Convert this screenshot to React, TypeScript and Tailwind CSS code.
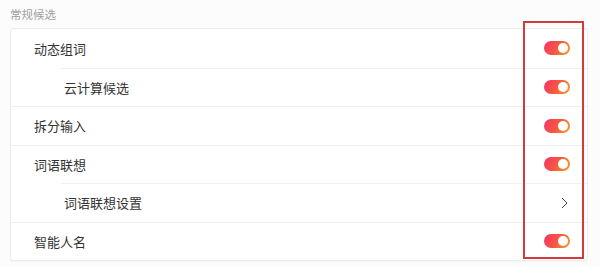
import React from "react";

type Item = { label: string; sub?: boolean; kind: "toggle" | "arrow" };

const items: Item[] = [
  { label: "动态组词", kind: "toggle" },
  { label: "云计算候选", sub: true, kind: "toggle" },
  { label: "拆分输入", kind: "toggle" },
  { label: "词语联想", kind: "toggle" },
  { label: "词语联想设置", sub: true, kind: "arrow" },
  { label: "智能人名", kind: "toggle" },
];

function Toggle() {
  return (
    <div className="relative h-[14px] w-[26px] rounded-full bg-[linear-gradient(120deg,#f5336e_0%,#f6583f_50%,#f8a02a_100%)]">
      <div className="absolute right-[2px] top-[2px] h-[10px] w-[10px] rounded-full bg-white" />
    </div>
  );
}

function Chevron() {
  return (
    <svg width="7" height="12" viewBox="0 0 7 12" fill="none">
      <path d="M1 1l5 5-5 5" stroke="#444" strokeWidth="1" />
    </svg>
  );
}

export default function App() {
  return (
    <div
      className="relative h-[267px] w-[600px] bg-[#fcfcfc] pt-[6px]"
      style={{ fontFamily: '"Noto Sans CJK SC", "Noto Sans", sans-serif' }}
    >
      <div className="ml-[10px] h-[22px] text-[11.5px] leading-[16px] text-[#a0a0a0]">常规候选</div>
      <div className="mx-[10px] w-[578px] overflow-hidden rounded-[3px] border border-[#ececec] bg-white shadow-[0_1px_1px_rgba(0,0,0,0.03)]">
        {items.map((it, i) => (
          <div
            key={it.label}
            className={`flex h-[38.5px] items-center ${i > 0 ? "border-t border-[#f0f0f0]" : ""} ${
              it.sub ? "ml-[50px] pl-[3px]" : "pl-[23px]"
            }`}
          >
            <span className="flex-1 text-[13px] text-[#333]">{it.label}</span>
            <div className={`mr-[17px] flex w-[26px] ${it.kind === "toggle" ? "justify-center" : "justify-end pr-[2px]"}`}>
              {it.kind === "toggle" ? <Toggle /> : <Chevron />}
            </div>
          </div>
        ))}
      </div>
      <div className="pointer-events-none absolute left-[523px] top-[21px] h-[238px] w-[61px] border-[2.5px] border-[#d13b3b]" />
    </div>
  );
}
